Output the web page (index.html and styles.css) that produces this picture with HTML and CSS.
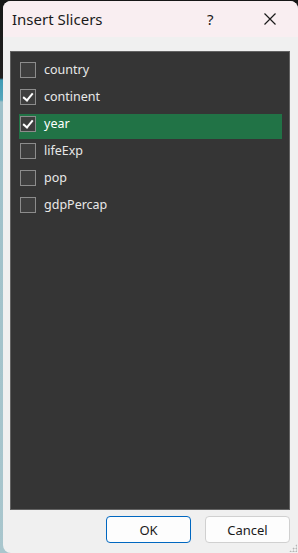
FILE: index.html
```html
<!DOCTYPE html>
<html lang="en">
<head>
  <meta charset="UTF-8">
  <meta name="viewport" content="width=device-width, initial-scale=1.0">
  <title>Insert Slicers</title>
  <link rel="stylesheet" href="styles.css">
</head>
<body>
  <div class="dialog">
    <header class="titlebar">
      <h1 class="title">Insert Slicers</h1>
      <span class="help">?</span>
      <span class="close">
        <svg width="14" height="14" viewBox="0 0 14 14">
          <path d="M1.5 1.5 L12.5 12.5 M12.5 1.5 L1.5 12.5" stroke="#1a1a1a" stroke-width="1.2" fill="none"/>
        </svg>
      </span>
    </header>
    <main class="content">
      <ul class="field-list">
        <li class="field"><span class="box"></span>country</li>
        <li class="field"><span class="box checked"></span>continent</li>
        <li class="field active"><span class="box checked"></span>year</li>
        <li class="field"><span class="box"></span>lifeExp</li>
        <li class="field"><span class="box"></span>pop</li>
        <li class="field"><span class="box"></span>gdpPercap</li>
      </ul>
      <div class="actions">
        <button class="btn btn-ok">OK</button>
        <button class="btn">Cancel</button>
      </div>
    </main>
    <span class="grip"></span>
  </div>
</body>
</html>
```
FILE: styles.css
```css
html, body {
  margin: 0;
  padding: 0;
  height: 100%;
}
body {
  font-family: "Noto Sans", "Open Sans", sans-serif;
  background: linear-gradient(to bottom, #161616 0, #202020 78px, #3f9bb5 80px, #56a6bb 100px, #9ec0c9 102px, #a9c6cd 100%);
  overflow: hidden;
}
.dialog {
  position: relative;
  margin-left: 3px;
  margin-top: 1px;
  width: 295px;
  height: 552px;
  background: #f0f0f0;
  border-radius: 8px 8px 0 8px;
  display: flex;
  flex-direction: column;
  overflow: hidden;
}
.titlebar {
  height: 36px;
  background: #f9eef1;
  display: flex;
  align-items: center;
  flex-shrink: 0;
}
.title {
  margin: 0 0 0 9px;
  font-size: 15px;
  font-weight: normal;
  color: #1a1a1a;
  flex: 1;
}
.help {
  font-size: 15px;
  color: #1a1a1a;
  width: 16px;
  margin-right: 40px;
}
.close {
  display: flex;
  margin-right: 21px;
}
.content {
  flex: 1;
  display: flex;
  flex-direction: column;
  padding: 14px 8px 8px 7px;
}
.field-list {
  list-style: none;
  margin: 0;
  padding: 8px 7px 0 8px;
  height: 449px;
  background: #353535;
  border: 1px solid #626262;
}
.field {
  box-sizing: border-box;
  height: 25px;
  padding-bottom: 6px;
  margin-bottom: 2px;
  display: flex;
  align-items: center;
  font-size: 12.5px;
  color: #e8e8e8;
}
.field.active {
  background: #217346;
  color: #fff;
}
.box {
  width: 14px;
  height: 14px;
  border: 1px solid #8c8c8c;
  background: #3e3e3e;
  margin-left: 1px;
  margin-right: 8px;
  position: relative;
  box-sizing: content-box;
}
.box.checked::after {
  content: "";
  position: absolute;
  left: 4px;
  top: 1px;
  width: 4px;
  height: 8px;
  border: solid #fff;
  border-width: 0 2px 2px 0;
  transform: rotate(40deg);
}
.actions {
  display: flex;
  justify-content: flex-end;
  gap: 14px;
  margin-top: 6px;
}
.btn {
  width: 85px;
  height: 27px;
  background: #fdfdfd;
  border: 1px solid #d0d0d0;
  border-radius: 4px;
  font-family: "Noto Sans", "Open Sans", sans-serif;
  font-size: 13px;
  color: #1a1a1a;
  padding: 0;
}
.btn-ok {
  border-color: #0067c0;
}
.grip {
  position: absolute;
  right: 1px;
  bottom: 1px;
  width: 8px;
  height: 8px;
  background: radial-gradient(circle, #b5b5b5 0.8px, transparent 1.2px) 0 0 / 3px 3px;
  clip-path: polygon(100% 0, 100% 100%, 0 100%);
}
```
